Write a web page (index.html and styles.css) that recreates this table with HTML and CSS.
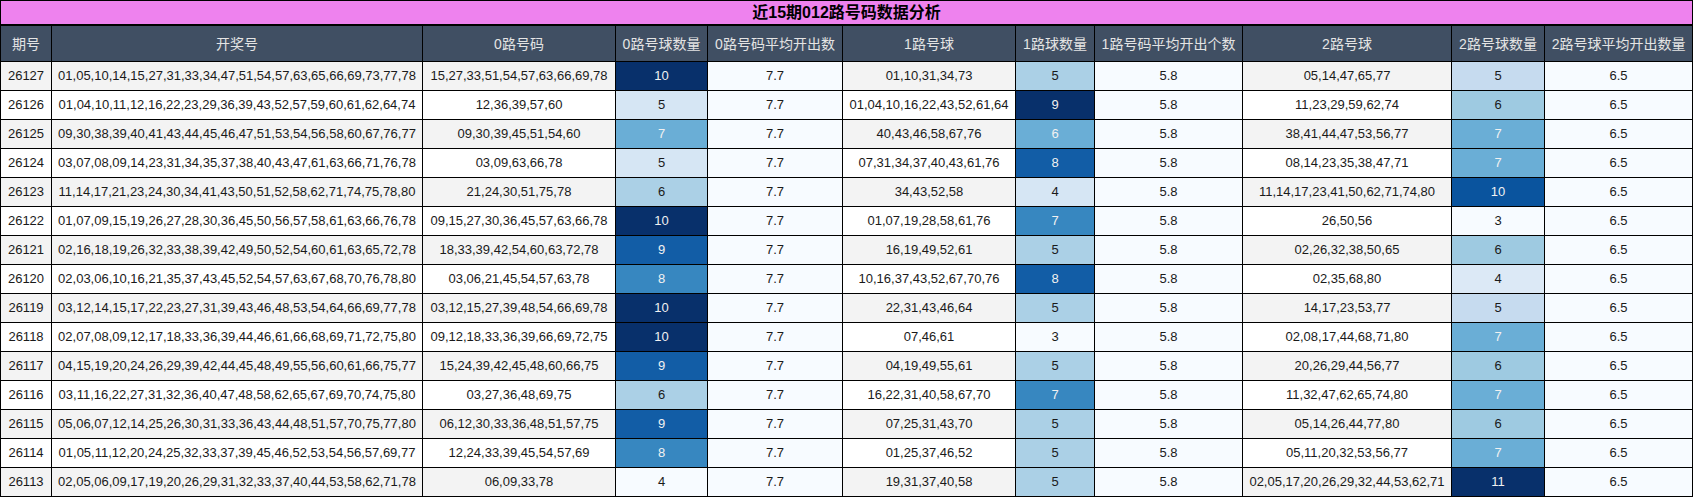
FILE: index.html
```html
<!DOCTYPE html>
<html lang="zh">
<head>
<meta charset="utf-8">
<title>近15期012路号码数据分析</title>
<link rel="stylesheet" href="styles.css">
</head>
<body>
<table class="grid">
  <colgroup>
    <col class="w-id"><col class="w-draw"><col class="w-r0"><col class="w-n0"><col class="w-a0">
    <col class="w-r1"><col class="w-n1"><col class="w-a1"><col class="w-r2"><col class="w-n2"><col class="w-a2">
  </colgroup>
  <thead>
    <tr class="title-row"><th colspan="11" class="title">近15期012路号码数据分析</th></tr>
    <tr class="head-row">
      <th>期号</th><th>开奖号</th><th>0路号码</th><th>0路号球数量</th><th>0路号码平均开出数</th>
      <th>1路号球</th><th>1路球数量</th><th>1路号码平均开出个数</th><th>2路号球</th><th>2路号球数量</th><th>2路号球平均开出数量</th>
    </tr>
  </thead>
  <tbody>
    <tr class="odd"><td>26127</td><td>01,05,10,14,15,27,31,33,34,47,51,54,57,63,65,66,69,73,77,78</td><td>15,27,33,51,54,57,63,66,69,78</td><td class="b6 lt">10</td><td class="avg">7.7</td><td>01,10,31,34,73</td><td class="b2">5</td><td class="avg">5.8</td><td>05,14,47,65,77</td><td class="k2">5</td><td class="avg">6.5</td></tr>
    <tr><td>26126</td><td>01,04,10,11,12,16,22,23,29,36,39,43,52,57,59,60,61,62,64,74</td><td>12,36,39,57,60</td><td class="b1">5</td><td class="avg">7.7</td><td>01,04,10,16,22,43,52,61,64</td><td class="b6 lt">9</td><td class="avg">5.8</td><td>11,23,29,59,62,74</td><td class="k3">6</td><td class="avg">6.5</td></tr>
    <tr class="odd"><td>26125</td><td>09,30,38,39,40,41,43,44,45,46,47,51,53,54,56,58,60,67,76,77</td><td>09,30,39,45,51,54,60</td><td class="b3 lt">7</td><td class="avg">7.7</td><td>40,43,46,58,67,76</td><td class="b3 lt">6</td><td class="avg">5.8</td><td>38,41,44,47,53,56,77</td><td class="k4 lt">7</td><td class="avg">6.5</td></tr>
    <tr><td>26124</td><td>03,07,08,09,14,23,31,34,35,37,38,40,43,47,61,63,66,71,76,78</td><td>03,09,63,66,78</td><td class="b1">5</td><td class="avg">7.7</td><td>07,31,34,37,40,43,61,76</td><td class="b5 lt">8</td><td class="avg">5.8</td><td>08,14,23,35,38,47,71</td><td class="k4 lt">7</td><td class="avg">6.5</td></tr>
    <tr class="odd"><td>26123</td><td>11,14,17,21,23,24,30,34,41,43,50,51,52,58,62,71,74,75,78,80</td><td>21,24,30,51,75,78</td><td class="b2">6</td><td class="avg">7.7</td><td>34,43,52,58</td><td class="b1">4</td><td class="avg">5.8</td><td>11,14,17,23,41,50,62,71,74,80</td><td class="k7 lt">10</td><td class="avg">6.5</td></tr>
    <tr><td>26122</td><td>01,07,09,15,19,26,27,28,30,36,45,50,56,57,58,61,63,66,76,78</td><td>09,15,27,30,36,45,57,63,66,78</td><td class="b6 lt">10</td><td class="avg">7.7</td><td>01,07,19,28,58,61,76</td><td class="b4 lt">7</td><td class="avg">5.8</td><td>26,50,56</td><td class="b0">3</td><td class="avg">6.5</td></tr>
    <tr class="odd"><td>26121</td><td>02,16,18,19,26,32,33,38,39,42,49,50,52,54,60,61,63,65,72,78</td><td>18,33,39,42,54,60,63,72,78</td><td class="b5 lt">9</td><td class="avg">7.7</td><td>16,19,49,52,61</td><td class="b2">5</td><td class="avg">5.8</td><td>02,26,32,38,50,65</td><td class="k3">6</td><td class="avg">6.5</td></tr>
    <tr><td>26120</td><td>02,03,06,10,16,21,35,37,43,45,52,54,57,63,67,68,70,76,78,80</td><td>03,06,21,45,54,57,63,78</td><td class="b4 lt">8</td><td class="avg">7.7</td><td>10,16,37,43,52,67,70,76</td><td class="b5 lt">8</td><td class="avg">5.8</td><td>02,35,68,80</td><td class="k1">4</td><td class="avg">6.5</td></tr>
    <tr class="odd"><td>26119</td><td>03,12,14,15,17,22,23,27,31,39,43,46,48,53,54,64,66,69,77,78</td><td>03,12,15,27,39,48,54,66,69,78</td><td class="b6 lt">10</td><td class="avg">7.7</td><td>22,31,43,46,64</td><td class="b2">5</td><td class="avg">5.8</td><td>14,17,23,53,77</td><td class="k2">5</td><td class="avg">6.5</td></tr>
    <tr><td>26118</td><td>02,07,08,09,12,17,18,33,36,39,44,46,61,66,68,69,71,72,75,80</td><td>09,12,18,33,36,39,66,69,72,75</td><td class="b6 lt">10</td><td class="avg">7.7</td><td>07,46,61</td><td class="b0">3</td><td class="avg">5.8</td><td>02,08,17,44,68,71,80</td><td class="k4 lt">7</td><td class="avg">6.5</td></tr>
    <tr class="odd"><td>26117</td><td>04,15,19,20,24,26,29,39,42,44,45,48,49,55,56,60,61,66,75,77</td><td>15,24,39,42,45,48,60,66,75</td><td class="b5 lt">9</td><td class="avg">7.7</td><td>04,19,49,55,61</td><td class="b2">5</td><td class="avg">5.8</td><td>20,26,29,44,56,77</td><td class="k3">6</td><td class="avg">6.5</td></tr>
    <tr><td>26116</td><td>03,11,16,22,27,31,32,36,40,47,48,58,62,65,67,69,70,74,75,80</td><td>03,27,36,48,69,75</td><td class="b2">6</td><td class="avg">7.7</td><td>16,22,31,40,58,67,70</td><td class="b4 lt">7</td><td class="avg">5.8</td><td>11,32,47,62,65,74,80</td><td class="k4 lt">7</td><td class="avg">6.5</td></tr>
    <tr class="odd"><td>26115</td><td>05,06,07,12,14,25,26,30,31,33,36,43,44,48,51,57,70,75,77,80</td><td>06,12,30,33,36,48,51,57,75</td><td class="b5 lt">9</td><td class="avg">7.7</td><td>07,25,31,43,70</td><td class="b2">5</td><td class="avg">5.8</td><td>05,14,26,44,77,80</td><td class="k3">6</td><td class="avg">6.5</td></tr>
    <tr><td>26114</td><td>01,05,11,12,20,24,25,32,33,37,39,45,46,52,53,54,56,57,69,77</td><td>12,24,33,39,45,54,57,69</td><td class="b4 lt">8</td><td class="avg">7.7</td><td>01,25,37,46,52</td><td class="b2">5</td><td class="avg">5.8</td><td>05,11,20,32,53,56,77</td><td class="k4 lt">7</td><td class="avg">6.5</td></tr>
    <tr class="odd"><td>26113</td><td>02,05,06,09,17,19,20,26,29,31,32,33,37,40,44,53,58,62,71,78</td><td>06,09,33,78</td><td class="b0">4</td><td class="avg">7.7</td><td>19,31,37,40,58</td><td class="b2">5</td><td class="avg">5.8</td><td>02,05,17,20,26,29,32,44,53,62,71</td><td class="b6 lt">11</td><td class="avg">6.5</td></tr>
  </tbody>
</table>
</body>
</html>
```

FILE: styles.css
```css
html, body {
  margin: 0;
  padding: 0;
  background: #ffffff;
}

body {
  font-family: "Liberation Sans", Arial, "Noto Sans CJK SC", sans-serif;
  color: #1a1a1a;
}

.grid {
  border-collapse: separate;
  border-spacing: 0;
  table-layout: fixed;
  width: 1693px;
  border-top: 1px solid #000;
  border-left: 1px solid #000;
}

.w-id { width: 51px; }
.w-draw { width: 371px; }
.w-r0 { width: 193px; }
.w-n0 { width: 92px; }
.w-a0 { width: 135px; }
.w-r1 { width: 173px; }
.w-n1 { width: 79px; }
.w-a1 { width: 148px; }
.w-r2 { width: 209px; }
.w-n2 { width: 93px; }
.w-a2 { width: 148px; }

.grid th,
.grid td {
  box-sizing: border-box;
  border-right: 1px solid #000;
  border-bottom: 1px solid #000;
  padding: 0 2px;
  text-align: center;
  vertical-align: middle;
  white-space: nowrap;
  overflow: hidden;
}

.title-row { height: 25px; }
.grid th.title {
  background: #ee82ee;
  color: #000;
  font-size: 16px;
  font-weight: bold;
  border-bottom-width: 2px;
  line-height: 20px;
}

.head-row { height: 36px; }
.head-row th {
  background: #404f63;
  color: #e4e4e4;
  font-size: 14px;
  font-weight: normal;
  line-height: 18px;
}

.grid tbody tr { height: 29px; }
.grid tbody tr td {
  font-size: 13px;
  line-height: 16px;
  background: #ffffff;
}
.grid tbody tr.odd td { background: #f3f3f3; }

.grid tbody tr td.avg { background: #f7fbff; }

.grid tbody tr td.b0 { background: #f7fbff; }
.grid tbody tr td.b1 { background: #d6e6f4; }
.grid tbody tr td.b2 { background: #abd0e6; }
.grid tbody tr td.b3 { background: #6aaed6; }
.grid tbody tr td.b4 { background: #3787c0; }
.grid tbody tr td.b5 { background: #125da6; }
.grid tbody tr td.b6 { background: #08306b; }

.grid tbody tr td.k1 { background: #dce9f6; }
.grid tbody tr td.k2 { background: #c6dbef; }
.grid tbody tr td.k3 { background: #9ecae1; }
.grid tbody tr td.k4 { background: #6aaed6; }
.grid tbody tr td.k7 { background: #0a549e; }

.grid tbody tr td.lt { color: #f1f1f1; }
```
